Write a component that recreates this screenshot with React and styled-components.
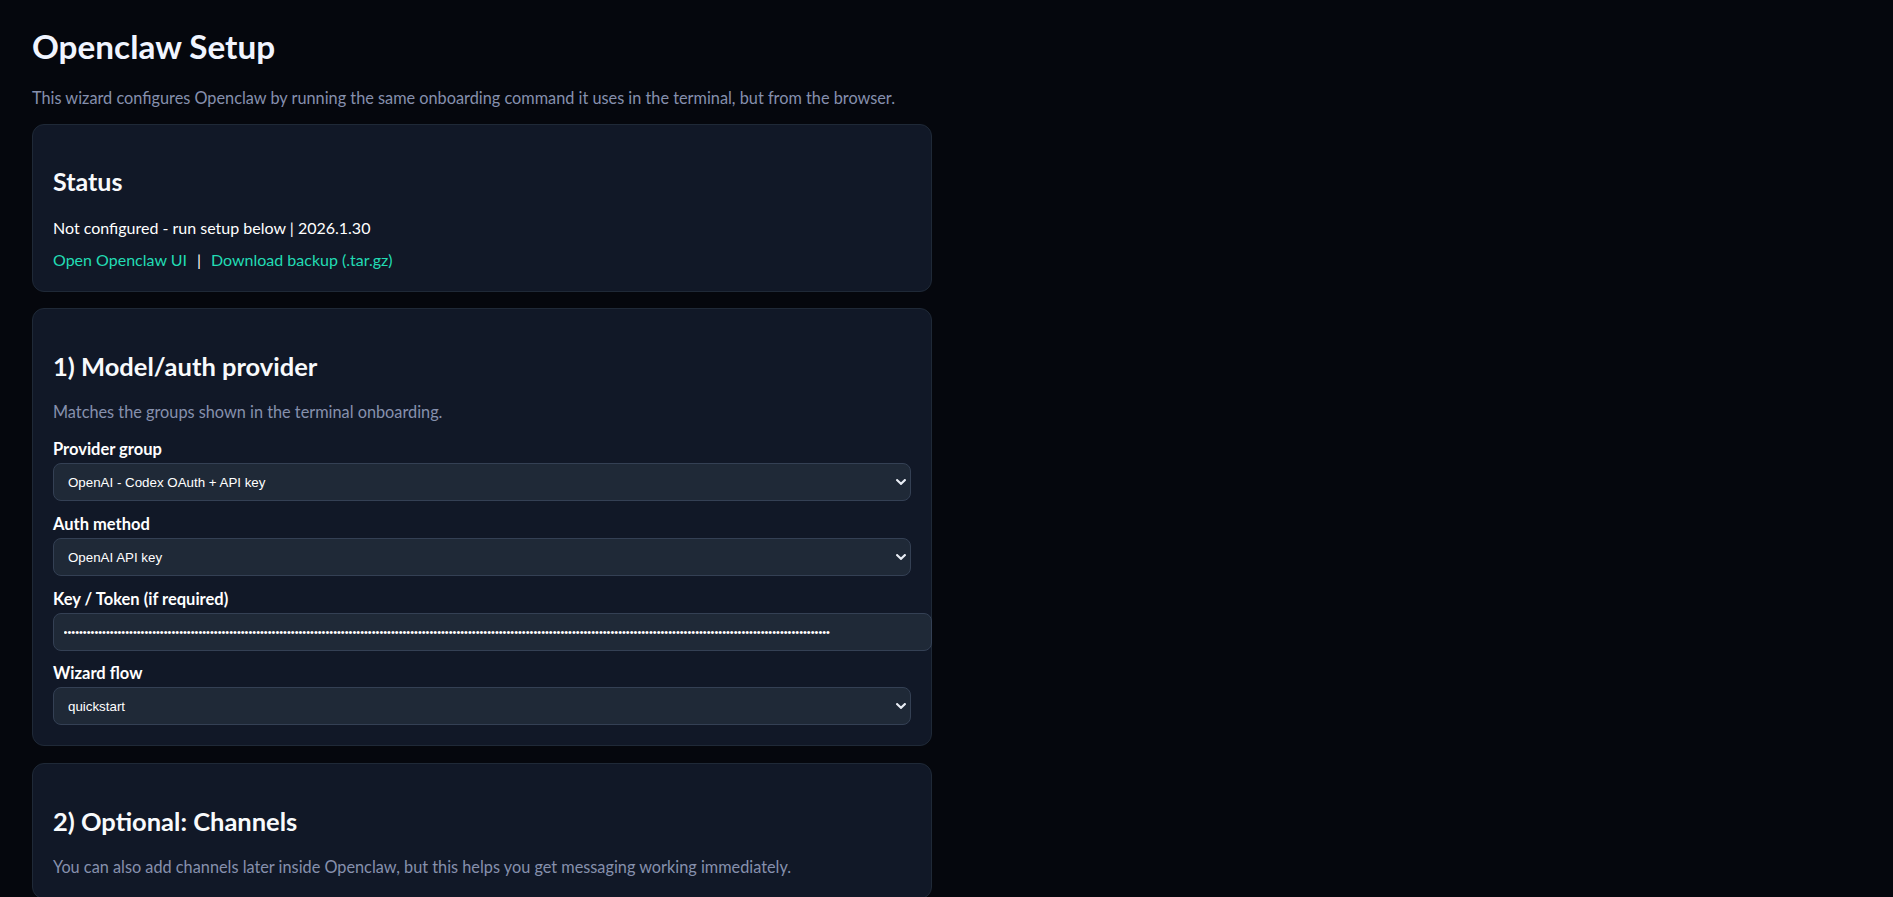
import React from "react";
import styled, { createGlobalStyle } from "styled-components";

const GlobalStyle = createGlobalStyle`
  html, body {
    margin: 0;
    padding: 0;
    background: #05070d;
  }
  body {
    font-family: Lato, "Noto Sans", sans-serif;
    color: #f1f5f9;
  }
`;

const Page = styled.main`
  padding: 0 32px 40px;
  max-width: 900px;
`;

const Title = styled.h1`
  margin: 26px 0 0;
  font-size: 33.3px;
  line-height: 40px;
  font-weight: 700;
  color: #f1f5ff;
`;

const Muted = styled.p`
  margin: ${(p) => p.$top || 0}px 0 0;
  font-size: 16.3px;
  line-height: 22px;
  color: #8690ad;
`;

const Card = styled.section`
  margin-top: ${(p) => p.$top || 17}px;
  background: #111827;
  border: 1px solid #1f2937;
  border-radius: 12px;
  padding: 20px;
`;

const CardTitle = styled.h2`
  margin: 21px 0 0;
  font-size: ${(p) => (p.$small ? 25 : 25.5)}px;
  line-height: ${(p) => (p.$small ? 30 : 32)}px;
  font-weight: 700;
  color: #f8fafc;
`;

const StatusLine = styled.p`
  margin: 21px 0 0;
  font-size: 16px;
  line-height: 22px;
  color: #ffffff;
`;

const Links = styled.div`
  margin-top: 10px;
  font-size: 16px;
  line-height: 22px;
  display: flex;
  align-items: center;
`;

const Link = styled.a`
  color: #22dcb4;
  text-decoration: none;
`;

const Sep = styled.span`
  color: #ffffff;
  margin: 0 10px;
`;

const Label = styled.label`
  display: block;
  margin-top: ${(p) => p.$top || 12}px;
  font-size: 16.5px;
  line-height: 22px;
  font-weight: 700;
  color: #ffffff;
`;

const SelectWrap = styled.div`
  position: relative;
  margin-top: 3px;
`;

const Select = styled.select`
  appearance: none;
  display: block;
  width: 100%;
  height: 38px;
  box-sizing: border-box;
  padding: 0 28px 0 14px;
  background: #1f2937;
  border: 1px solid #344054;
  border-radius: 8px;
  color: #ffffff;
  font-family: "Liberation Sans", Arial, sans-serif;
  font-size: 13.33px;
`;

const Chevron = styled.svg`
  position: absolute;
  right: 5px;
  top: 16px;
  pointer-events: none;
`;

const KeyInput = styled.input`
  display: block;
  margin-top: 3px;
  width: 100%;
  height: 36px;
  box-sizing: content-box;
  padding: 0 9.6px;
  background: #1f2937;
  border: 1px solid #344054;
  border-radius: 8px;
  color: #ffffff;
  font-family: "Liberation Sans", Arial, sans-serif;
  font-size: 11px;
  outline: none;
`;

const SelectField = ({ value, options }) => (
  <SelectWrap>
    <Select defaultValue={value}>
      {options.map((o) => (
        <option key={o} value={o}>
          {o}
        </option>
      ))}
    </Select>
    <Chevron width="10" height="6" viewBox="0 0 10 6" fill="none">
      <path d="M1.2 1.2 L5 4.8 L8.8 1.2" stroke="#e8ecf4" strokeWidth="2.2" strokeLinecap="square" />
    </Chevron>
  </SelectWrap>
);

const fakeKey = "x".repeat(199);

export default function App() {
  return (
    <>
      <GlobalStyle />
      <Page>
        <Title>Openclaw Setup</Title>
        <Muted $top={21}>
          This wizard configures Openclaw by running the same onboarding command it uses in the terminal, but from the
          browser.
        </Muted>

        <Card $top={15}>
          <CardTitle $small>Status</CardTitle>
          <StatusLine>Not configured - run setup below | 2026.1.30</StatusLine>
          <Links>
            <Link href="#">Open Openclaw UI</Link>
            <Sep>|</Sep>
            <Link href="#">Download backup (.tar.gz)</Link>
          </Links>
        </Card>

        <Card $top={16}>
          <CardTitle>1) Model/auth provider</CardTitle>
          <Muted $top={19}>Matches the groups shown in the terminal onboarding.</Muted>
          <Label $top={15}>Provider group</Label>
          <SelectField
            value="OpenAI - Codex OAuth + API key"
            options={["OpenAI - Codex OAuth + API key", "Anthropic - API key", "Google - Gemini API key"]}
          />
          <Label>Auth method</Label>
          <SelectField value="OpenAI API key" options={["OpenAI API key", "Codex OAuth"]} />
          <Label>Key / Token (if required)</Label>
          <KeyInput type="password" defaultValue={fakeKey} />
          <Label $top={11}>Wizard flow</Label>
          <SelectField value="quickstart" options={["quickstart", "advanced"]} />
        </Card>

        <Card>
          <CardTitle>2) Optional: Channels</CardTitle>
          <Muted $top={19}>
            You can also add channels later inside Openclaw, but this helps you get messaging working immediately.
          </Muted>
        </Card>
      </Page>
    </>
  );
}
